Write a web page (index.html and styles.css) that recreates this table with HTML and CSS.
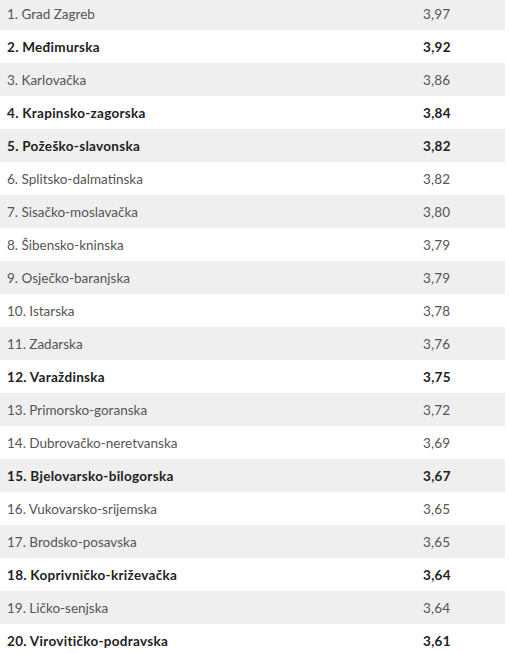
FILE: index.html
```html
<!DOCTYPE html>
<html lang="hr">

<head>
  <meta charset="UTF-8" />
  <meta name="viewport" content="width=device-width, initial-scale=1.0" />
  <title>Županije</title>
  <link rel="stylesheet" href="styles.css">
</head>

<body>
  <table class="rank">
    <tbody>
      <tr><td>1. Grad Zagreb</td><td class="val">3,97</td></tr>
      <tr class="hl"><td>2. Međimurska</td><td class="val">3,92</td></tr>
      <tr><td>3. Karlovačka</td><td class="val">3,86</td></tr>
      <tr class="hl"><td>4. Krapinsko-zagorska</td><td class="val">3,84</td></tr>
      <tr class="hl"><td>5. Požeško-slavonska</td><td class="val">3,82</td></tr>
      <tr><td>6. Splitsko-dalmatinska</td><td class="val">3,82</td></tr>
      <tr><td>7. Sisačko-moslavačka</td><td class="val">3,80</td></tr>
      <tr><td>8. Šibensko-kninska</td><td class="val">3,79</td></tr>
      <tr><td>9. Osječko-baranjska</td><td class="val">3,79</td></tr>
      <tr><td>10. Istarska</td><td class="val">3,78</td></tr>
      <tr><td>11. Zadarska</td><td class="val">3,76</td></tr>
      <tr class="hl"><td>12. Varaždinska</td><td class="val">3,75</td></tr>
      <tr><td>13. Primorsko-goranska</td><td class="val">3,72</td></tr>
      <tr><td>14. Dubrovačko-neretvanska</td><td class="val">3,69</td></tr>
      <tr class="hl"><td>15. Bjelovarsko-bilogorska</td><td class="val">3,67</td></tr>
      <tr><td>16. Vukovarsko-srijemska</td><td class="val">3,65</td></tr>
      <tr><td>17. Brodsko-posavska</td><td class="val">3,65</td></tr>
      <tr class="hl"><td>18. Koprivničko-križevačka</td><td class="val">3,64</td></tr>
      <tr><td>19. Ličko-senjska</td><td class="val">3,64</td></tr>
      <tr class="hl"><td>20. Virovitičko-podravska</td><td class="val">3,61</td></tr>
    </tbody>
  </table>
</body>

</html>
```

FILE: styles.css
```css
body {
  margin: 0;
  background: #fff;
  font-family: Lato, "Open Sans", sans-serif;
  font-size: 13.5px;
  color: #555;
}

.rank {
  width: 505px;
  margin-top: -3px;
  border-collapse: collapse;
}

.rank td {
  height: 33px;
  padding: 0 0 0 7px;
  vertical-align: middle;
}

/* zebra pruge */
.rank tr:nth-child(odd) {
  background: #efefef;
}

.rank .val {
  width: 82px;
  padding-left: 0;
  letter-spacing: 0.2px;
}

.rank tr.hl td {
  font-weight: bold;
  letter-spacing: 0.3px;
  color: #222;
}
```
